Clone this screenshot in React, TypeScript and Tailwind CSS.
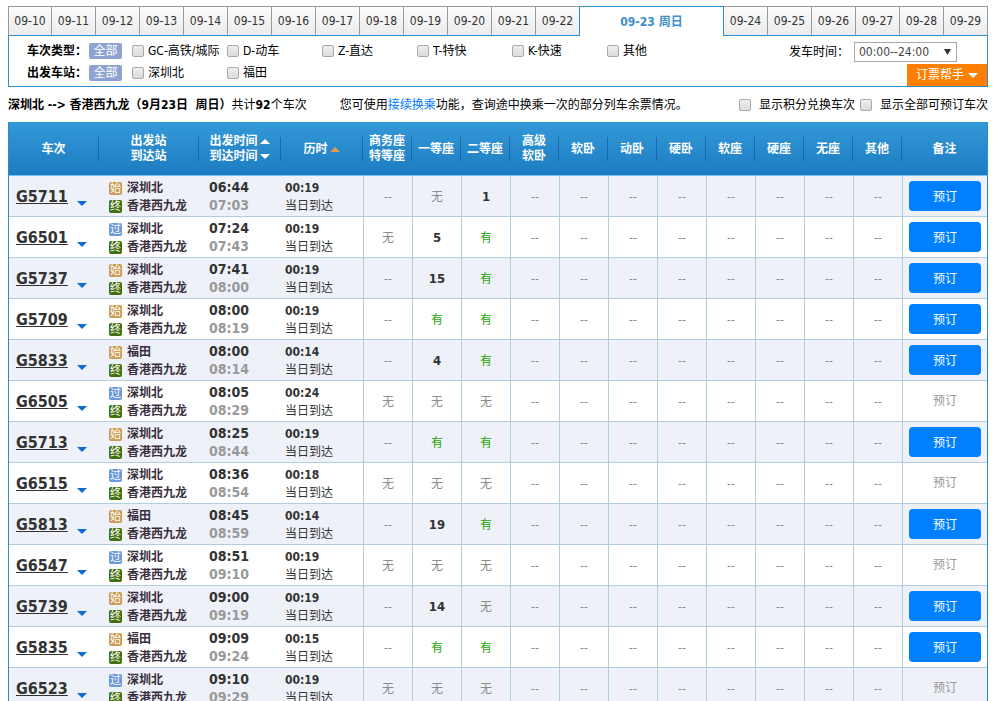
import type { ReactNode } from 'react';

type Train = {
    code: string;
    from: string;
    pass?: boolean;
    start: string;
    end: string;
    duration: string;
    seats: [string, string, string];
};

const TRAINS: Train[] = [
    { code: 'G5711', from: '深圳北', start: '06:44', end: '07:03', duration: '00:19', seats: ['--', '无', '1'] },
    { code: 'G6501', from: '深圳北', pass: true, start: '07:24', end: '07:43', duration: '00:19', seats: ['无', '5', '有'] },
    { code: 'G5737', from: '深圳北', start: '07:41', end: '08:00', duration: '00:19', seats: ['--', '15', '有'] },
    { code: 'G5709', from: '深圳北', start: '08:00', end: '08:19', duration: '00:19', seats: ['--', '有', '有'] },
    { code: 'G5833', from: '福田', start: '08:00', end: '08:14', duration: '00:14', seats: ['--', '4', '有'] },
    { code: 'G6505', from: '深圳北', pass: true, start: '08:05', end: '08:29', duration: '00:24', seats: ['无', '无', '无'] },
    { code: 'G5713', from: '深圳北', start: '08:25', end: '08:44', duration: '00:19', seats: ['--', '有', '有'] },
    { code: 'G6515', from: '深圳北', pass: true, start: '08:36', end: '08:54', duration: '00:18', seats: ['无', '无', '无'] },
    { code: 'G5813', from: '福田', start: '08:45', end: '08:59', duration: '00:14', seats: ['--', '19', '有'] },
    { code: 'G6547', from: '深圳北', pass: true, start: '08:51', end: '09:10', duration: '00:19', seats: ['无', '无', '无'] },
    { code: 'G5739', from: '深圳北', start: '09:00', end: '09:19', duration: '00:19', seats: ['--', '14', '无'] },
    { code: 'G5835', from: '福田', start: '09:09', end: '09:24', duration: '00:15', seats: ['--', '有', '有'] },
    { code: 'G6523', from: '深圳北', pass: true, start: '09:10', end: '09:29', duration: '00:19', seats: ['无', '无', '无'] }
];

const DATES_BEFORE = ['09-10', '09-11', '09-12', '09-13', '09-14', '09-15', '09-16', '09-17', '09-18', '09-19', '09-20', '09-21', '09-22'];
const DATES_AFTER = ['09-24', '09-25', '09-26', '09-27', '09-28', '09-29'];
const TRAIN_TYPES = ['GC-高铁/城际', 'D-动车', 'Z-直达', 'T-特快', 'K-快速', '其他'];
const STATIONS = ['深圳北', '福田'];
const SEAT_HEADERS = ['商务座\n特等座', '一等座', '二等座', '高级\n软卧', '软卧', '动卧', '硬卧', '软座', '硬座', '无座', '其他'];

function Triangle({ className, up }: { className?: string; up?: boolean }) {
    return (
        <svg className={className} width="10" height="5" viewBox="0 0 10 5" fill="currentColor" aria-hidden="true">
            <path d={up ? 'M0 5 5 0l5 5z' : 'M0 0h10L5 5z'} />
        </svg>
    );
}

function DateTab({ date }: { date: string }) {
    // the tab next to the selected day closes with the blue border
    const edge = date === '09-22' ? 'border-r-[#2c8bcc]' : 'border-r-[#999]';
    return (
        <button
            type="button"
            className={`min-w-0 border-t border-r border-b border-t-[#999] border-b-[#2c8bcc] bg-linear-to-b from-[#fbfbfb] to-[#ececec] text-[#333] first:border-l first:border-l-[#999] ${edge}`}
        >
            {date}
        </button>
    );
}

function Check({ label, className }: { label: string; className: string }) {
    return (
        <label className={`flex items-center whitespace-nowrap ${className}`}>
            <input
                type="checkbox"
                className="size-3 shrink-0 appearance-none rounded-xs border border-[#aaa] bg-linear-to-b from-[#eee] to-[#dcdcdc] checked:from-[#2c8bcc] checked:to-[#2c8bcc]"
            />
            {label}
        </label>
    );
}

function FilterRow({ title, options }: { title: string; options: string[] }) {
    return (
        <div className="flex h-[22px] items-center">
            <span className="w-[62px] font-bold whitespace-nowrap">{title}</span>
            <button type="button" className="mr-[10px] h-4 w-[33px] rounded-xs bg-[#8fa3d1] leading-4 text-white">
                全部
            </button>
            {options.map((option) => (
                <Check key={option} label={option} className="w-[95px] gap-1" />
            ))}
        </div>
    );
}

function HeaderCell({ children }: { children: ReactNode }) {
    return (
        <th className="border-b border-[#7cc3f0] p-0 pt-px font-bold text-white">
            <div className="flex h-6 items-center justify-center gap-[2px] border-r border-[#1a68ab] leading-[15px] whitespace-pre">{children}</div>
        </th>
    );
}

function StationBadge({ kind }: { kind: '始' | '过' | '终' }) {
    const color = kind === '始' ? 'bg-[#cb9b54]' : kind === '过' ? 'bg-[#6d99dc]' : 'bg-[#41700f]';
    return (
        <span className={`flex size-[13px] items-center justify-center rounded-xs text-[11px] leading-none font-normal text-white ${color}`}>{kind}</span>
    );
}

function SeatCell({ value }: { value: string }) {
    const style = value === '有' ? 'text-[#26a306]' : /\d/.test(value) ? 'text-[13px] font-bold text-[#333]' : 'text-[#8c8c8c]';
    return <td className={`border-b border-l border-[#b0cedd] p-0 pt-[2px] text-center ${style}`}>{value}</td>;
}

function TrainRow({ train }: { train: Train }) {
    const soldOut = train.seats.every((seat) => seat === '无');
    return (
        <tr className="h-[41px] odd:bg-[#eef1f8]">
            <td className="border-b border-[#b0cedd] p-0 pt-[2px] pl-[7px]">
                <div className="flex items-center gap-[9px]">
                    <a href="#" className="text-base leading-5 font-bold text-[#333] underline">{train.code}</a>
                    <button type="button" aria-label={`${train.code} 经停站`} className="pt-3">
                        <Triangle className="text-[#0f6ad0]" />
                    </button>
                </div>
            </td>
            <td className="border-b border-[#b0cedd] p-0 pt-[2px] pl-[10px] leading-[18px] font-bold text-[#3a2f3d]">
                <div className="flex items-center gap-[5px]">
                    <StationBadge kind={train.pass ? '过' : '始'} />
                    {train.from}
                </div>
                <div className="flex items-center gap-[5px]">
                    <StationBadge kind="终" />
                    香港西九龙
                </div>
            </td>
            <td className="border-b border-[#b0cedd] p-0 pl-[10px] text-sm leading-[18px] font-bold">
                <div className="text-[#333]">{train.start}</div>
                <div className="text-[#999]">{train.end}</div>
            </td>
            <td className="border-b border-[#b0cedd] p-0 pt-[2px] pl-1 leading-[18px] text-[#333]">
                <div className="font-bold">{train.duration}</div>
                <div>当日到达</div>
            </td>
            {train.seats.map((seat, i) => (
                <SeatCell key={i} value={seat} />
            ))}
            {SEAT_HEADERS.slice(3).map((name) => (
                <SeatCell key={name} value="--" />
            ))}
            <td className="border-b border-l border-[#b0cedd] px-[6px] py-0 text-center text-[#999]">
                {soldOut ? (
                    '预订'
                ) : (
                    <button type="button" className="block h-[30px] w-full rounded-sm bg-[#0080ff] pt-[2px] text-white">
                        预订
                    </button>
                )}
            </td>
        </tr>
    );
}

export default function App() {
    return (
        <main className="h-screen overflow-hidden bg-white pt-[6px] pr-[5px] pl-2 font-['DejaVu_Sans_Condensed','Noto_Sans_CJK_SC',sans-serif] text-xs text-black">
            <nav className="grid h-[30px] grid-cols-[repeat(13,44fr)_144fr_repeat(6,44fr)]">
                {DATES_BEFORE.map((date) => (
                    <DateTab key={date} date={date} />
                ))}
                <button type="button" className="border-t border-r border-[#2c8bcc] font-bold text-[#3d8fcb]">
                    09-23 周日
                </button>
                {DATES_AFTER.map((date) => (
                    <DateTab key={date} date={date} />
                ))}
            </nav>

            <section className="flex justify-between border-x border-b border-[#2c8bcc] pl-[18px]">
                <div className="pt-1 pb-[2px]">
                    <FilterRow title="车次类型：" options={TRAIN_TYPES} />
                    <FilterRow title="出发车站：" options={STATIONS} />
                </div>
                <div className="flex flex-col items-end justify-between pt-[6px]">
                    <div className="flex items-center pr-[30px]">
                        <label htmlFor="depart-time" className="w-[65px] whitespace-nowrap">发车时间：</label>
                        <div className="relative">
                            <select id="depart-time" className="block h-5 w-[103px] appearance-none border border-[#a9a9a9] bg-white pl-1 leading-[18px] text-[#444]">
                                <option>00:00--24:00</option>
                            </select>
                            <svg className="pointer-events-none absolute top-[7px] right-[6px]" width="7" height="6" viewBox="0 0 7 6" aria-hidden="true">
                                <path d="M0 0h7L3.5 6z" fill="#333" />
                            </svg>
                        </div>
                    </div>
                    <button type="button" className="flex h-[22px] w-20 items-center justify-center gap-1 bg-[#ff8000] text-white">
                        订票帮手
                        <Triangle />
                    </button>
                </div>
            </section>

            <section className="flex h-[35px] items-center justify-between pt-px whitespace-nowrap">
                <div className="flex gap-[33px]">
                    <p>
                        <strong>深圳北 --&gt; 香港西九龙（9月23日&nbsp; 周日）</strong>共计<strong>92</strong>个车次
                    </p>
                    <p>
                        您可使用<a href="#" className="text-[#0077ff]">接续换乘</a>功能，查询途中换乘一次的部分列车余票情况。
                    </p>
                </div>
                <div className="flex gap-[5px]">
                    <Check label="显示积分兑换车次" className="gap-2" />
                    <Check label="显示全部可预订车次" className="gap-2" />
                </div>
            </section>

            <table className="w-full table-fixed border-separate border-spacing-0 border-x border-[#2c8bcc]">
                <colgroup>
                    <col className="w-[90px]" />
                    <col className="w-[100px]" />
                    <col className="w-[82px]" />
                    <col className="w-[82px]" />
                    {SEAT_HEADERS.map((name) => (
                        <col key={name} className="w-[49px]" />
                    ))}
                    <col />
                </colgroup>
                <thead>
                    <tr className="h-[54px] bg-linear-to-b from-[#3499d8] to-[#1b7bc0]">
                        <HeaderCell>车次</HeaderCell>
                        <HeaderCell>{'出发站\n到达站'}</HeaderCell>
                        <HeaderCell>
                            {'出发时间\n到达时间'}
                            <span className="flex flex-col gap-[10px]">
                                <Triangle className="text-white" up />
                                <Triangle className="text-white" />
                            </span>
                        </HeaderCell>
                        <HeaderCell>
                            历时
                            <Triangle className="text-[#e39a4f]" up />
                        </HeaderCell>
                        {SEAT_HEADERS.map((name) => (
                            <HeaderCell key={name}>{name}</HeaderCell>
                        ))}
                        <th className="border-b border-[#7cc3f0] p-0 pt-px font-bold text-white">备注</th>
                    </tr>
                </thead>
                <tbody>
                    {TRAINS.map((train) => (
                        <TrainRow key={train.code} train={train} />
                    ))}
                </tbody>
            </table>
        </main>
    );
}
